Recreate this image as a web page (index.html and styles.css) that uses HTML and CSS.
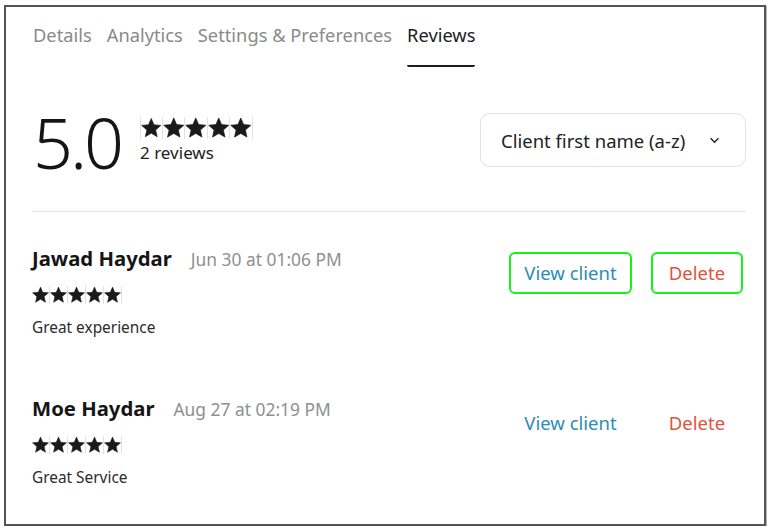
FILE: index.html
```html
<!DOCTYPE html>
<html>
<head>
<meta charset="utf-8">
<link rel="stylesheet" href="styles.css">
</head>
<body>
<div class="frame">
  <nav class="tabs">
    <span class="tab">Details</span>
    <span class="tab">Analytics</span>
    <span class="tab">Settings &amp; Preferences</span>
    <span class="tab active">Reviews</span>
  </nav>

  <section class="summary">
    <div class="score">
      <div class="big">5.0</div>
      <div class="score-meta">
        <div class="stars stars-lg">
          <svg viewBox="0 0 24 24"><path d="M12 0.8L15.17 8.23 23.22 8.95 17.14 14.27 18.94 22.15 12 18 5.06 22.15 6.86 14.27 0.78 8.95 8.83 8.23Z"/></svg>
          <svg viewBox="0 0 24 24"><path d="M12 0.8L15.17 8.23 23.22 8.95 17.14 14.27 18.94 22.15 12 18 5.06 22.15 6.86 14.27 0.78 8.95 8.83 8.23Z"/></svg>
          <svg viewBox="0 0 24 24"><path d="M12 0.8L15.17 8.23 23.22 8.95 17.14 14.27 18.94 22.15 12 18 5.06 22.15 6.86 14.27 0.78 8.95 8.83 8.23Z"/></svg>
          <svg viewBox="0 0 24 24"><path d="M12 0.8L15.17 8.23 23.22 8.95 17.14 14.27 18.94 22.15 12 18 5.06 22.15 6.86 14.27 0.78 8.95 8.83 8.23Z"/></svg>
          <svg viewBox="0 0 24 24"><path d="M12 0.8L15.17 8.23 23.22 8.95 17.14 14.27 18.94 22.15 12 18 5.06 22.15 6.86 14.27 0.78 8.95 8.83 8.23Z"/></svg>
        </div>
        <div class="count">2 reviews</div>
      </div>
    </div>
    <div class="select">
      <span>Client first name (a-z)</span>
      <svg class="chev" viewBox="0 0 12 8"><path d="M1.5 1.5L6 6l4.5-4.5"/></svg>
    </div>
  </section>

  <hr class="divider">

  <article class="review">
    <div class="review-body">
      <div class="head"><span class="name">Jawad Haydar</span><span class="date">Jun 30 at 01:06 PM</span></div>
      <div class="stars stars-sm">
        <svg viewBox="0 0 24 24"><path d="M12 0.8L15.17 8.23 23.22 8.95 17.14 14.27 18.94 22.15 12 18 5.06 22.15 6.86 14.27 0.78 8.95 8.83 8.23Z"/></svg>
        <svg viewBox="0 0 24 24"><path d="M12 0.8L15.17 8.23 23.22 8.95 17.14 14.27 18.94 22.15 12 18 5.06 22.15 6.86 14.27 0.78 8.95 8.83 8.23Z"/></svg>
        <svg viewBox="0 0 24 24"><path d="M12 0.8L15.17 8.23 23.22 8.95 17.14 14.27 18.94 22.15 12 18 5.06 22.15 6.86 14.27 0.78 8.95 8.83 8.23Z"/></svg>
        <svg viewBox="0 0 24 24"><path d="M12 0.8L15.17 8.23 23.22 8.95 17.14 14.27 18.94 22.15 12 18 5.06 22.15 6.86 14.27 0.78 8.95 8.83 8.23Z"/></svg>
        <svg viewBox="0 0 24 24"><path d="M12 0.8L15.17 8.23 23.22 8.95 17.14 14.27 18.94 22.15 12 18 5.06 22.15 6.86 14.27 0.78 8.95 8.83 8.23Z"/></svg>
      </div>
      <p class="text">Great experience</p>
    </div>
    <div class="actions">
      <button class="btn view focus">View client</button>
      <button class="btn del focus">Delete</button>
    </div>
  </article>

  <article class="review">
    <div class="review-body">
      <div class="head"><span class="name">Moe Haydar</span><span class="date">Aug 27 at 02:19 PM</span></div>
      <div class="stars stars-sm">
        <svg viewBox="0 0 24 24"><path d="M12 0.8L15.17 8.23 23.22 8.95 17.14 14.27 18.94 22.15 12 18 5.06 22.15 6.86 14.27 0.78 8.95 8.83 8.23Z"/></svg>
        <svg viewBox="0 0 24 24"><path d="M12 0.8L15.17 8.23 23.22 8.95 17.14 14.27 18.94 22.15 12 18 5.06 22.15 6.86 14.27 0.78 8.95 8.83 8.23Z"/></svg>
        <svg viewBox="0 0 24 24"><path d="M12 0.8L15.17 8.23 23.22 8.95 17.14 14.27 18.94 22.15 12 18 5.06 22.15 6.86 14.27 0.78 8.95 8.83 8.23Z"/></svg>
        <svg viewBox="0 0 24 24"><path d="M12 0.8L15.17 8.23 23.22 8.95 17.14 14.27 18.94 22.15 12 18 5.06 22.15 6.86 14.27 0.78 8.95 8.83 8.23Z"/></svg>
        <svg viewBox="0 0 24 24"><path d="M12 0.8L15.17 8.23 23.22 8.95 17.14 14.27 18.94 22.15 12 18 5.06 22.15 6.86 14.27 0.78 8.95 8.83 8.23Z"/></svg>
      </div>
      <p class="text">Great Service</p>
    </div>
    <div class="actions">
      <button class="btn view">View client</button>
      <button class="btn del">Delete</button>
    </div>
  </article>
</div>
</body>
</html>
```

FILE: styles.css
```css
* { box-sizing: border-box; }

html, body {
  margin: 0;
  padding: 0;
  background: #fff;
}

body {
  font-family: "Noto Sans", "Open Sans", sans-serif;
  color: #222;
}

.frame {
  margin: 5px 0 0 4px;
  width: 762px;
  height: 521px;
  border: 2px solid #555;
  box-shadow: 1px 1px 0 #b5b5b5;
  padding: 0 18px 0 26px;
}

.tabs {
  display: flex;
  gap: 15px;
  padding-top: 16px;
  padding-left: 1px;
}

.tab {
  font-size: 18.3px;
  line-height: 24px;
  color: #8a8a8a;
  padding-bottom: 18px;
  border-bottom: 2px solid transparent;
}

.tab.active {
  color: #1c1c1c;
  border-bottom-color: #1c1c1c;
  border-radius: 0 0 2px 2px;
}

.summary {
  display: flex;
  justify-content: space-between;
  align-items: center;
  margin-top: 46px;
  height: 54px;
}

.score {
  display: flex;
  align-items: center;
  gap: 19px;
  padding-left: 1px;
}

.big {
  font-size: 70px;
  line-height: 54px;
  color: #151515;
  font-weight: 300;
  letter-spacing: -3px;
  padding-top: 3px;
}

.score-meta {
  display: flex;
  flex-direction: column;
  gap: 4px;
}

.stars {
  display: flex;
}

.stars svg {
  fill: #1a1a1a;
  stroke: #1a1a1a;
  stroke-width: 0.8;
  stroke-linejoin: round;
  display: block;
  border-right: 1px solid #e2e2e2;
}

.stars-lg svg {
  width: 22.5px;
  height: 22px;
}

.stars-lg svg:first-child {
  border-left: 1px solid #e2e2e2;
}

.stars-sm svg {
  width: 18px;
  height: 18px;
}

.count {
  font-size: 17px;
  line-height: 20px;
  color: #222;
}

.select {
  display: flex;
  align-items: center;
  justify-content: space-between;
  width: 266px;
  height: 54px;
  border: 1px solid #e3e3e3;
  border-radius: 10px;
  padding: 0 25px 0 20px;
  font-size: 18.5px;
  color: #222;
}

.chev {
  width: 11px;
  height: 7px;
  fill: none;
  stroke: #222;
  stroke-width: 1.6;
}

.divider {
  margin: 44px 0 0 0;
  border: 0;
  border-top: 1px solid #e6e6e6;
  height: 0;
}

.review {
  display: flex;
  justify-content: space-between;
  align-items: flex-start;
  padding-top: 34px;
}

.review + .review {
  padding-top: 58px;
}

.head {
  display: flex;
  align-items: baseline;
  gap: 19px;
  line-height: 24px;
}

.name {
  font-size: 20.3px;
  font-weight: 700;
  color: #151515;
}

.date {
  font-size: 17.4px;
  color: #8f8f8f;
}

.stars-sm {
  margin-top: 15px;
}

.text {
  margin: 14px 0 0 0;
  font-size: 15.4px;
  line-height: 20px;
  color: #2b2b2b;
}

.actions {
  display: flex;
  gap: 19px;
  margin-top: 6px;
  margin-right: 3px;
}

.btn {
  font-family: inherit;
  font-size: 18.5px;
  height: 42px;
  background: #fff;
  border: 2px solid transparent;
  border-radius: 6px;
  padding: 0 0 2px 0;
  cursor: pointer;
}

.btn.focus {
  border-color: #19f019;
}

.btn.view {
  width: 123px;
  color: #2c8db4;
}

.btn.del {
  width: 92px;
  color: #e0533e;
}
```
